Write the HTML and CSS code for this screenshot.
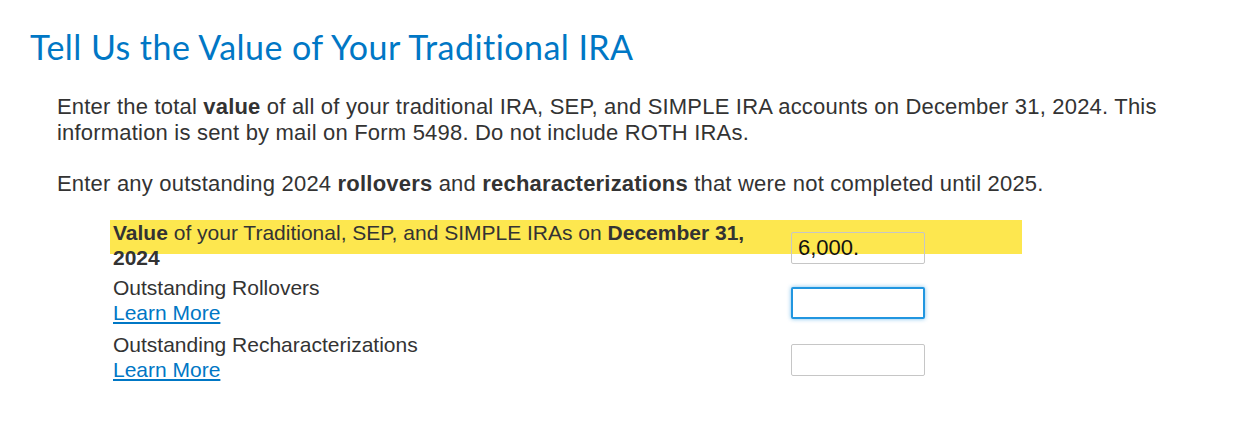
FILE: index.html
```html
<!DOCTYPE html>
<html lang="en">
<head>
    <meta charset="UTF-8">
    <meta name="viewport" content="width=device-width, initial-scale=1.0">
    <title>Tell Us the Value of Your Traditional IRA</title>
    <link rel="stylesheet" href="styles.css">
</head>
<body>
    <div class="page">
        <h1>Tell Us the Value of Your Traditional IRA</h1>
        <div class="intro">
            <p>Enter the total <strong>value</strong> of all of your traditional IRA, SEP, and SIMPLE IRA accounts on December 31, 2024. This information is sent by mail on Form 5498. Do not include ROTH IRAs.</p>
            <p>Enter any outstanding 2024 <strong>rollovers</strong> and <strong>recharacterizations</strong> that were not completed until 2025.</p>
        </div>

        <div class="ira-form">
            <div class="form-row highlight">
                <label class="row-label" for="iraValue"><strong>Value</strong> of your Traditional, SEP, and SIMPLE IRAs on <strong>December 31, 2024</strong></label>
                <input type="text" id="iraValue" value="6,000.">
            </div>
            <div class="form-row">
                <div class="row-label">
                    <label for="rollovers">Outstanding Rollovers</label><br>
                    <a href="#" class="learn-more">Learn More</a>
                </div>
                <input type="text" id="rollovers" class="focused">
            </div>
            <div class="form-row">
                <div class="row-label">
                    <label for="recharacterizations">Outstanding Recharacterizations</label><br>
                    <a href="#" class="learn-more">Learn More</a>
                </div>
                <input type="text" id="recharacterizations">
            </div>
        </div>
    </div>
</body>
</html>
```

FILE: styles.css
```css
body {
    margin: 0;
    background-color: #ffffff;
    font-family: "Liberation Sans", Arial, sans-serif;
    color: #333333;
}

.page {
    padding: 27px 0 0 30px;
}

h1 {
    margin: 0;
    font-family: Lato, "Open Sans", sans-serif;
    font-weight: 400;
    font-size: 34px;
    letter-spacing: 0.45px;
    line-height: 40px;
    color: #0077c5;
}

.intro {
    padding: 27px 0 0 27px;
    max-width: 1150px;
}

.intro p {
    margin: 0 0 25px;
    font-size: 22px;
    letter-spacing: 0.2px;
    line-height: 26px;
}

.intro p:last-child {
    margin-bottom: 23px;
}

.ira-form {
    margin-left: 80px;
    width: 912px;
}

.form-row {
    display: flex;
    align-items: flex-start;
    height: 50px;
    margin-bottom: 7px;
}

.form-row.highlight {
    height: 34px;
    margin-bottom: 21px;
    background-color: #fde74f;
}

.row-label {
    width: 660px;
    padding-left: 3px;
    font-size: 21px;
    line-height: 25px;
}

.learn-more {
    color: #0077c5;
    text-decoration: underline;
}

.form-row input {
    margin: 12px 0 0 18px;
    width: 134px;
    height: 32px;
    box-sizing: border-box;
    padding: 0 6px;
    border: 1px solid #c6c6c6;
    border-radius: 2px;
    background-color: transparent;
    font-family: "Liberation Sans", Arial, sans-serif;
    font-size: 22px;
    color: #111111;
}

.form-row input.focused {
    border: 2px solid #2196e0;
    box-shadow: 0 0 4px rgba(33, 150, 224, 0.6);
    background-color: #ffffff;
}

.form-row:last-child input {
    background-color: #ffffff;
}
```
